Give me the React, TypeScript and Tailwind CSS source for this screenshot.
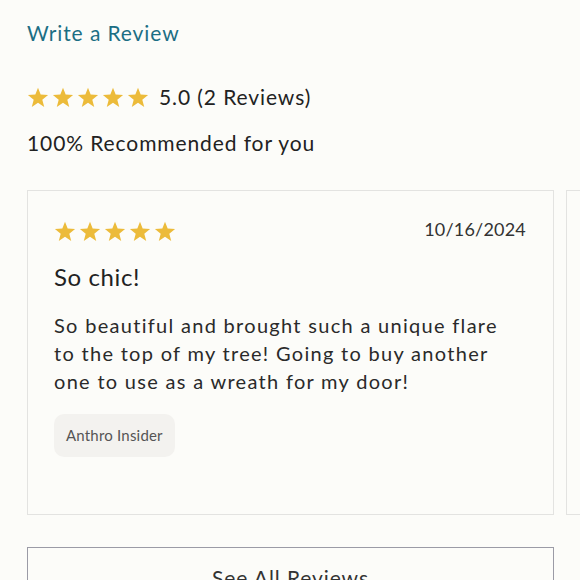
const Star = ({ size }: { size: number }) => (
  <svg width={size} height={size} viewBox="0 0 24 24" fill="#ecbb3a">
    <path d="M12 1.8l2.9 7.6 8.1.4-6.3 5.1 2.1 7.9L12 18.3l-6.8 4.5 2.1-7.9L1 9.8l8.1-.4z" />
  </svg>
);

const Stars = ({ size, gap }: { size: number; gap: string }) => (
  <div className={`flex ${gap}`}>
    {[0, 1, 2, 3, 4].map((i) => (
      <Star key={i} size={size} />
    ))}
  </div>
);

const App = () => {
  return (
    <div
      className="w-[580px] h-[580px] overflow-hidden bg-[#fcfcf9] text-[#222222]"
      style={{ fontFamily: "Lato, 'Noto Sans', sans-serif" }}
    >
      <div className="pl-[27px] pt-[19px]">
        <a className="block text-[21px] leading-[28px] tracking-[0.9px] text-[#1b6e84]">
          Write a Review
        </a>

        <div className="flex items-center gap-[10px] mt-[36px]">
          <Stars size={22} gap="gap-[3px]" />
          <span className="text-[21px] leading-[28px] tracking-[0.9px]">5.0 (2 Reviews)</span>
        </div>

        <p className="mt-[18px] text-[21px] leading-[28px] tracking-[0.9px]">
          100% Recommended for you
        </p>

        <div className="flex gap-[12px] mt-[33px]">
          <div className="w-[527px] h-[325px] shrink-0 border border-[#e3e3e1] px-[26px] pt-[28px]">
            <div className="flex justify-between items-center">
              <Stars size={22} gap="gap-[3px]" />
              <span className="text-[18px] tracking-[0.2px] text-[#333333] pr-[1px] -mt-[3px]">10/16/2024</span>
            </div>
            <h3 className="mt-[19px] text-[24px] leading-[30px] tracking-[0.6px]">So chic!</h3>
            <p className="mt-[19px] max-w-[455px] text-[20px] leading-[28px] tracking-[1.3px] text-[#2a2a2a]">
              So beautiful and brought such a unique flare to the top of my tree! Going to buy
              another one to use as a wreath for my door!
            </p>
            <div className="inline-flex items-center mt-[19px] h-[43px] px-[12px] rounded-[10px] bg-[#f3f2ef] text-[15px] text-[#555555] tracking-[0.2px]">
              Anthro Insider
            </div>
          </div>
          <div className="w-[527px] h-[325px] shrink-0 border border-[#e3e3e1]" />
        </div>

        <button className="mt-[32px] w-[527px] h-[60px] border border-[#9b9ba6] text-[21px] tracking-[0.9px] text-[#333333] flex justify-center pt-[14px]">
          See All Reviews
        </button>
      </div>
    </div>
  );
};

export default App;
